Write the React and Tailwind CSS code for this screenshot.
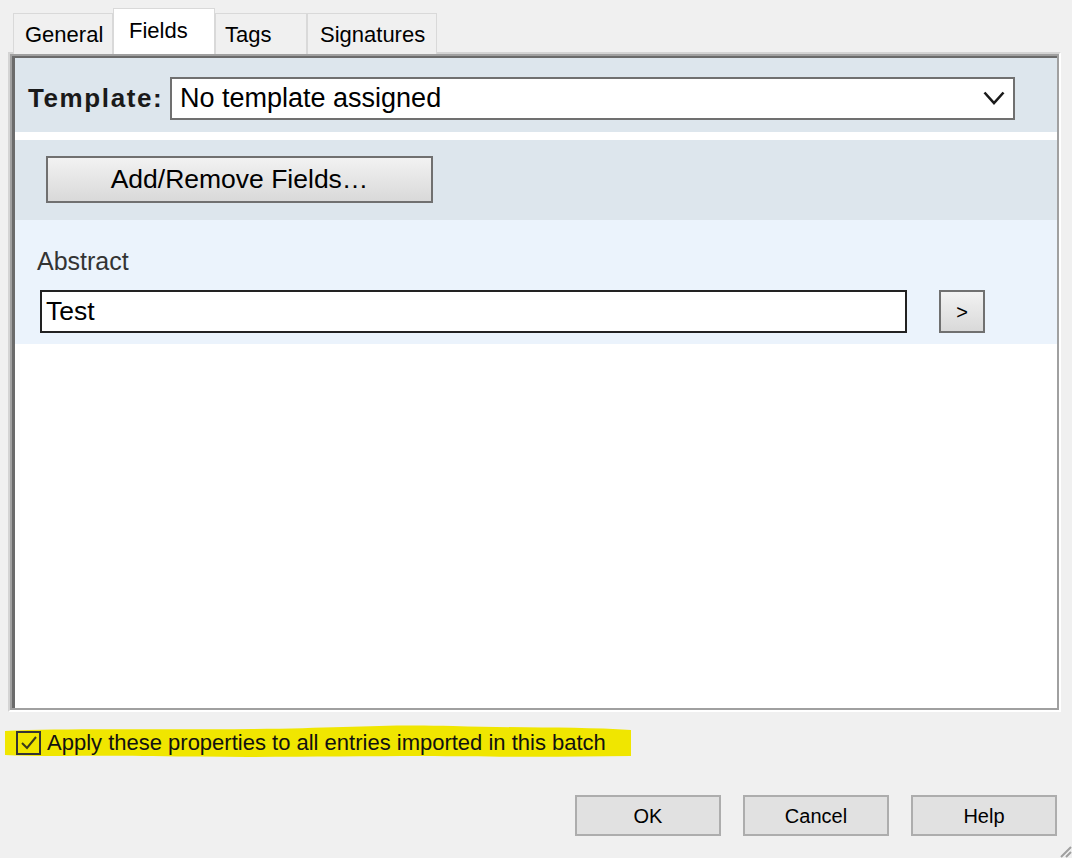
const Tab = ({ label, active, className }) => (
  <div
    className={
      active
        ? "relative z-10 h-[46px] bg-white border border-b-0 border-[#d9d9d9] text-[22px] leading-[26px] pt-[9px] " + className
        : "h-[41px] bg-[#f0f0f0] border border-b-0 border-[#d9d9d9] text-[22px] leading-[26px] pt-[8px] " + className
    }
  >
    {label}
  </div>
);

const WinButton = ({ children, className }) => (
  <button
    className={
      "flex items-center justify-center border-2 border-[#707070] bg-gradient-to-b from-[#f2f2f2] to-[#d9d9d9] text-black " +
      className
    }
  >
    {children}
  </button>
);

const DialogButton = ({ label }) => (
  <button className="w-[146px] h-[41px] border-2 border-[#adadad] bg-[#e1e1e1] text-[20px] text-black">
    {label}
  </button>
);

export default function App() {
  return (
    <div
      className="relative w-[1072px] h-[858px] overflow-hidden bg-[#f0f0f0] text-black"
      style={{ fontFamily: '"Liberation Sans", Arial, sans-serif' }}
    >
      {/* tabs */}
      <div className="flex items-end pl-[13px] pt-[8px]">
        <Tab label="General" className="w-[100px] pl-[11px]" />
        <Tab label="Fields" active className="w-[102px] pl-[15px]" />
        <Tab label="Tags" className="w-[92px] pl-[9px]" />
        <Tab label="Signatures" className="w-[130px] pl-[12px] text-[22.5px]" />
      </div>

      {/* panel */}
      <div className="-mt-[2px] ml-[8px] w-[1053px] h-[660px] border-2 border-[#d4d4d4] border-r-white border-b-white">
        <div className="h-full border-2 border-[#a0a0a0]">
          <div className="h-full flex flex-col border-t-2 border-l-[3px] border-[#6b6b6b] bg-white">
            {/* template row */}
            <div className="flex items-center h-[74px] bg-[#dde6ed] pl-[13px] pt-[7px]">
              <span className="w-[142px] text-[26px] font-bold tracking-[1.6px] text-[#1a1a1a]">Template:</span>
              <div className="flex items-center justify-between w-[845px] h-[43px] border-2 border-[#707070] bg-white pl-[8px] pr-[8px]">
                <span className="text-[27px]">No template assigned</span>
                <svg width="22" height="15" viewBox="0 0 22 15">
                  <path d="M1.5 1.5 L11 12 L20.5 1.5" fill="none" stroke="#1a1a1a" strokeWidth="2.6" />
                </svg>
              </div>
            </div>

            <div className="h-[8px] bg-white" />

            {/* add/remove */}
            <div className="h-[80px] bg-[#dde6ed] pl-[31px] pt-[16px]">
              <WinButton className="w-[387px] h-[47px] text-[26.5px]">Add/Remove Fields…</WinButton>
            </div>

            {/* abstract */}
            <div className="h-[124px] bg-[#ebf3fc] pl-[22px] pt-[26px]">
              <div className="text-[25px] leading-[30px] text-[#333]">Abstract</div>
              <div className="flex items-center gap-[32px] mt-[14px] ml-[3px]">
                <div className="w-[867px] h-[43px] border-2 border-[#222] bg-white pl-[4px] flex items-center">
                  <span className="text-[26.5px]">Test</span>
                </div>
                <WinButton className="w-[46px] h-[43px] text-[20px]">&gt;</WinButton>
              </div>
            </div>

            <div className="flex-1 bg-white" />
          </div>
        </div>
      </div>

      {/* checkbox row */}
      <div className="relative mt-[13px] h-[34px]">
        <svg className="absolute left-[3px] top-0" width="630" height="34" viewBox="0 0 630 34">
          <path
            d="M2 6 C 60 3, 150 5, 250 4 C 340 3, 380 -1, 450 1 C 520 3, 580 2, 628 5 L 628 31 C 560 32, 500 32, 420 31 C 330 31, 250 33, 150 31 C 90 30, 40 32, 2 30 Z"
            fill="#f0e600"
          />
        </svg>
        <div className="relative flex items-center pl-[16px] pt-[6px] gap-[6px]">
          <div className="w-[25px] h-[24px] border-2 border-[#333] bg-transparent flex items-center justify-center">
            <svg width="18" height="16" viewBox="0 0 18 16">
              <path d="M2 8 L7 13 L16 2" fill="none" stroke="#3a3a1a" strokeWidth="2" />
            </svg>
          </div>
          <span className="text-[22px] leading-[24px] text-[#111]">Apply these properties to all entries imported in this batch</span>
        </div>
      </div>

      {/* dialog buttons */}
      <div className="flex justify-end gap-[22px] pr-[15px] mt-[36px]">
        <DialogButton label="OK" />
        <DialogButton label="Cancel" />
        <DialogButton label="Help" />
      </div>

      {/* resize grip */}
      <svg className="absolute right-0 bottom-0" width="14" height="14" viewBox="0 0 14 14">
        <path d="M13 3 L3 13 M13 8 L8 13" stroke="#a0a0a0" strokeWidth="2" />
      </svg>
    </div>
  );
}
